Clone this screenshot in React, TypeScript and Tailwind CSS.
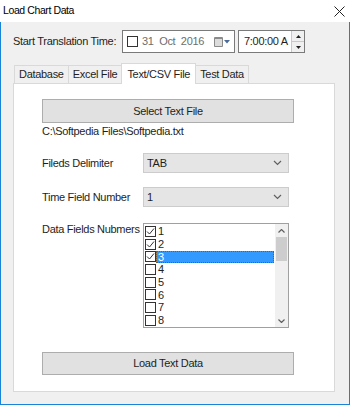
import React, { useState } from 'react';

const font = { fontFamily: '"Liberation Sans", Arial, sans-serif' };

const CheckBox = ({ checked }: { checked: boolean }) => (
  <span className="w-[11px] h-[11px] border border-[#333333] bg-white flex items-center justify-center shrink-0">
    {checked && (
      <svg width="9" height="9" viewBox="0 0 9 9">
        <path d="M1 4.5 L3.5 7 L8 1.5" fill="none" stroke="#333333" strokeWidth="1" />
      </svg>
    )}
  </span>
);

const Chevron = () => (
  <svg width="9" height="6" viewBox="0 0 9 6">
    <path d="M1 1 L4.5 4.5 L8 1" fill="none" stroke="#606060" strokeWidth="1.2" />
  </svg>
);

const tabs = ['Database', 'Excel File', 'Text/CSV File', 'Test Data'];

const App: React.FC = () => {
  const [activeTab] = useState(2);
  const [fields] = useState([1, 2, 3, 4, 5, 6, 7, 8]);
  const checked = [1, 2, 3];

  return (
    <div
      className="w-[350px] h-[405px] flex flex-col text-[11px] tracking-[-0.3px] text-[#1e1e1e] whitespace-nowrap"
      style={font}
    >
      {/* title bar */}
      <div className="h-[22px] bg-white flex items-center justify-between pl-[3px] pr-[5px] shrink-0">
        <span className="text-[10.5px] tracking-[-0.4px] text-black">Load Chart Data</span>
        <svg width="11" height="11" viewBox="0 0 11 11">
          <path d="M0.5 0.5 L10.5 10.5 M10.5 0.5 L0.5 10.5" stroke="#222" strokeWidth="1" />
        </svg>
      </div>

      <div className="flex-1 bg-[#f0f0f0] border-x border-b border-[#1883d7] flex flex-col pl-[12px] pr-[14px]">
        {/* start time row */}
        <div className="flex items-center mt-[8px] h-[23px]">
          <span className="w-[109px]">Start Translation Time:</span>
          <div className="w-[113px] h-[23px] border border-[#7a7a7a] bg-white flex items-center pl-[4px] pr-[4px]">
            <CheckBox checked={false} />
            <span className="ml-[4px] text-[#6d6d6d]">31&nbsp;&nbsp;Oct&nbsp;&nbsp;2016</span>
            <span className="ml-auto flex items-center gap-[1px]">
              <span className="w-[9px] h-[10px] bg-[#dcdcdc] border border-[#8a8a8a] border-t-2 rounded-[1px]" />
              <svg width="6" height="4" viewBox="0 0 6 4">
                <path d="M0 0 L6 0 L3 3.5 Z" fill="#4a6a9a" />
              </svg>
            </span>
          </div>
          <div className="ml-[3px] w-[67px] h-[23px] border border-[#7a7a7a] bg-white flex items-center pl-[5px]">
            <span className="flex-1 overflow-hidden">7:00:00 A</span>
            <div className="w-[13px] h-[21px] flex flex-col bg-[#f0f0f0] border-l border-[#c8c8c8]">
              <span className="flex-1 flex items-center justify-center border-b border-[#c8c8c8]">
                <svg width="5" height="3" viewBox="0 0 5 3"><path d="M0 3 L5 3 L2.5 0 Z" fill="#222" /></svg>
              </span>
              <span className="flex-1 flex items-center justify-center">
                <svg width="5" height="3" viewBox="0 0 5 3"><path d="M0 0 L5 0 L2.5 3 Z" fill="#222" /></svg>
              </span>
            </div>
          </div>
        </div>

        {/* tabs */}
        <div className="flex items-end mt-[9px] h-[21px] pl-[1px] relative z-10">
          {tabs.map((t, i) =>
            i === activeTab ? (
              <div
                key={t}
                className="h-[21px] px-[5px] bg-white border-x border-t border-[#d9d9d9] flex items-center -mb-px -ml-px"
              >
                {t}
              </div>
            ) : (
              <div
                key={t}
                className="h-[18px] px-[4px] bg-[#f0f0f0] border-t border-l border-r border-[#d9d9d9] flex items-center -ml-px first:ml-0"
              >
                {t}
              </div>
            ),
          )}
        </div>

        {/* panel */}
        <div className="h-[309px] bg-white border border-[#d9d9d9] flex flex-col pl-[28px] pt-[15px]">
          <button className="w-[252px] h-[24px] bg-[#e1e1e1] border border-[#adadad]">
            Select Text File
          </button>
          <div className="mt-[1px] h-[14px] leading-[14px]">C:\Softpedia Files\Softpedia.txt</div>

          <div className="flex items-center mt-[15px]">
            <span className="w-[101px]">Fileds Delimiter</span>
            <div className="w-[146px] h-[20px] bg-[#e5e5e5] border border-[#cccccc] flex items-center pl-[3px] pr-[6px]">
              <span className="flex-1">TAB</span>
              <Chevron />
            </div>
          </div>

          <div className="flex items-center mt-[14px]">
            <span className="w-[101px]">Time Field Number</span>
            <div className="w-[146px] h-[20px] bg-[#e5e5e5] border border-[#cccccc] flex items-center pl-[3px] pr-[6px]">
              <span className="flex-1">1</span>
              <Chevron />
            </div>
          </div>

          <div className="flex items-start mt-[16px]">
            <span className="w-[101px] leading-[13px]">Data Fields Nubmers</span>
            <div className="w-[146px] h-[105px] bg-white border border-[#a0a0a0] flex">
              <div className="flex-1 flex flex-col pl-[1px] pt-[1px]">
                {fields.map((n) => {
                  const sel = n === 3;
                  return (
                    <div key={n} className="h-[12.7px] flex items-center">
                      <CheckBox checked={checked.includes(n)} />
                      <span
                        className={
                          sel
                            ? 'flex-1 h-[12px] bg-[#3399ff] text-white border border-dotted border-[#7a5a30] leading-[10px] pl-[1px] mr-[1px]'
                            : 'pl-[2px] leading-[12px]'
                        }
                      >
                        {n}
                      </span>
                    </div>
                  );
                })}
              </div>
              <div className="w-[13px] bg-[#f0f0f0] flex flex-col">
                <span className="h-[13px] flex items-center justify-center">
                  <svg width="7" height="4" viewBox="0 0 7 4"><path d="M0.5 3.5 L3.5 0.5 L6.5 3.5" fill="none" stroke="#606060" strokeWidth="1.2" /></svg>
                </span>
                <span className="h-[24px] bg-[#cdcdcd] mx-[1px]" />
                <span className="flex-1" />
                <span className="h-[13px] flex items-center justify-center">
                  <svg width="7" height="4" viewBox="0 0 7 4"><path d="M0.5 0.5 L3.5 3.5 L6.5 0.5" fill="none" stroke="#606060" strokeWidth="1.2" /></svg>
                </span>
              </div>
            </div>
          </div>

          <button className="mt-[24px] w-[252px] h-[23px] bg-[#e1e1e1] border border-[#adadad]">
            Load Text Data
          </button>
        </div>
      </div>
    </div>
  );
};

export default App;
